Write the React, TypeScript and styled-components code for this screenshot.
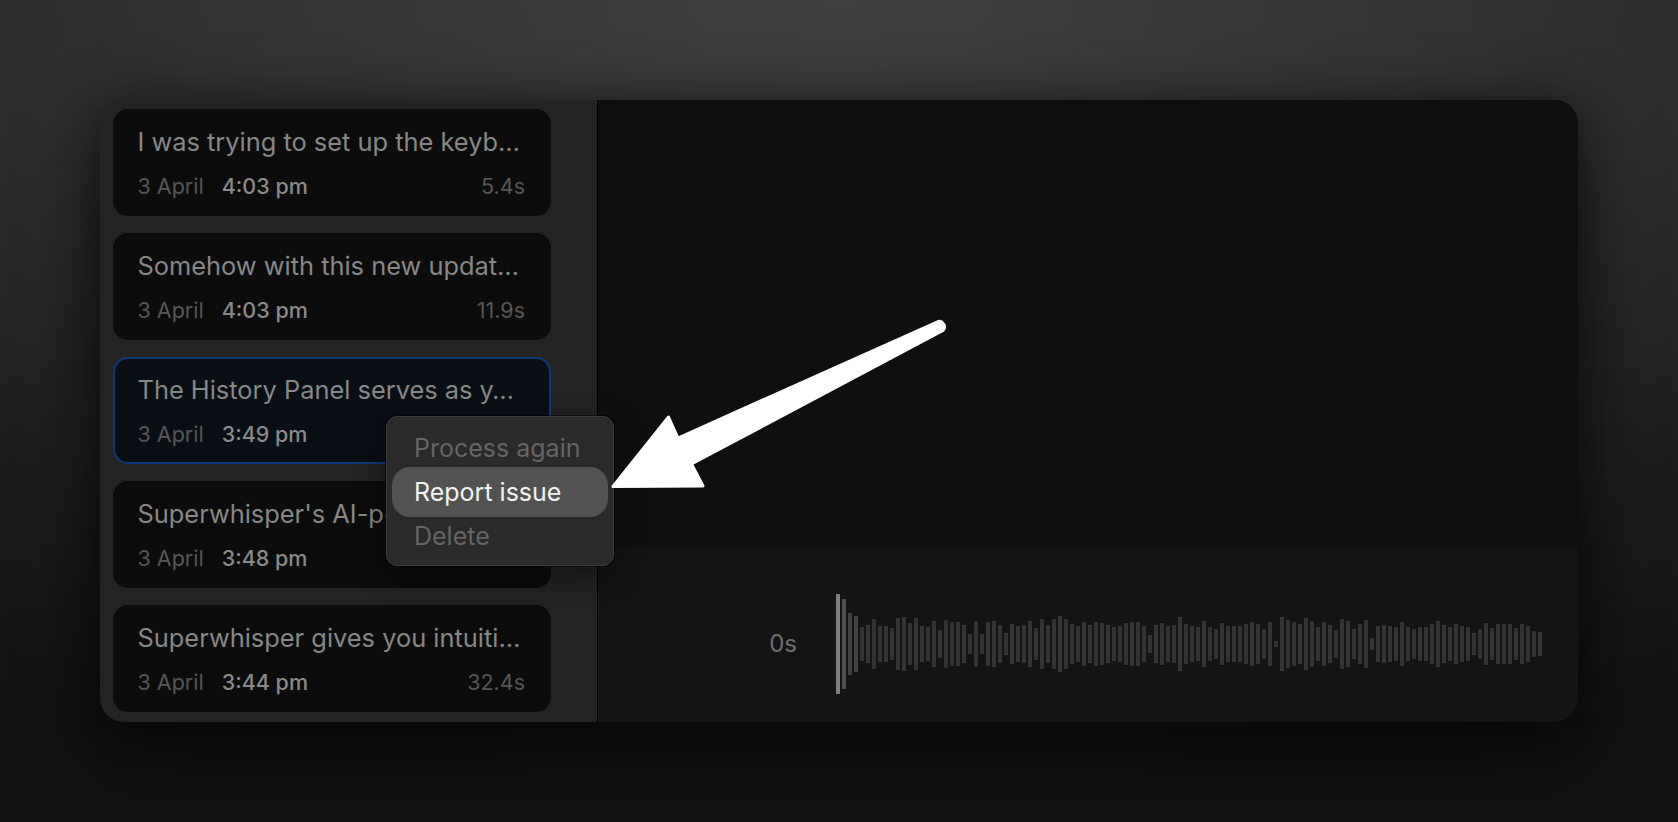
import React from "react";
import styled, { createGlobalStyle } from "styled-components";

const GlobalStyle = createGlobalStyle`
  html, body {
    margin: 0;
    padding: 0;
    height: 100%;
  }
  body {
    font-family: Inter, "Noto Sans", "Liberation Sans", sans-serif;
    background: #1a1a1a;
    -webkit-font-smoothing: antialiased;
  }
  #root {
    height: 100%;
  }
`;

const Page = styled.div`
  position: relative;
  width: 100%;
  height: 100vh;
  display: flex;
  align-items: center;
  justify-content: center;
  overflow: hidden;
  background: radial-gradient(
    120% 95% at 50% 0%,
    #414141 0%,
    #333333 30%,
    #262626 55%,
    #1a1a1a 78%,
    #121212 100%
  );
`;

const Window = styled.div`
  position: relative;
  width: 1478px;
  height: 622px;
  display: flex;
  border-radius: 24px;
  overflow: hidden;
  box-shadow: 0 30px 80px rgba(0, 0, 0, 0.55), 0 0 40px rgba(0, 0, 0, 0.35);
`;

const Sidebar = styled.div`
  width: 498px;
  flex: none;
  box-sizing: border-box;
  padding: 9px 46px 10px 13px;
  background: #232323;
  border-right: 1px solid #000;
  display: flex;
  flex-direction: column;
  gap: 17px;
`;

const Card = styled.div<{ $selected?: boolean }>`
  height: 107px;
  flex: none;
  box-sizing: border-box;
  border-radius: 15px;
  background: ${(p) => (p.$selected ? "#0a0e15" : "#0c0c0c")};
  border: 2px solid ${(p) => (p.$selected ? "#0b3a7c" : "transparent")};
  padding: 15px 24px 0 22.5px;
  display: flex;
  flex-direction: column;
`;

const Title = styled.div`
  font-size: 25.4px;
  line-height: 31px;
  color: #878787;
  white-space: nowrap;
  overflow: hidden;
`;

const Meta = styled.div`
  display: flex;
  align-items: baseline;
  margin-top: 16px;
  font-size: 21.5px;
  line-height: 26px;
`;

const DateText = styled.span`
  color: #575757;
`;

const TimeText = styled.span`
  color: #8a8a8a;
  font-weight: 500;
  margin-left: 18px;
`;

const Duration = styled.span`
  margin-left: auto;
  color: #575757;
`;

const Main = styled.div`
  flex: 1;
  display: flex;
  flex-direction: column;
  background: #0f0f0f;
`;

const Preview = styled.div`
  height: 447px;
  flex: none;
  background: #0f0f0f;
`;

const Player = styled.div`
  flex: 1;
  box-sizing: border-box;
  padding-top: 19px;
  background: #141414;
  display: flex;
  align-items: center;
`;

const TimeLabel = styled.div`
  width: 199px;
  flex: none;
  margin-right: 39px;
  text-align: right;
  font-size: 24px;
  line-height: 1;
  color: #6f6f6f;
`;

const Wave = styled.svg`
  display: block;
  flex: none;
`;

const Menu = styled.div`
  position: absolute;
  left: 286px;
  top: 316px;
  width: 228px;
  height: 150px;
  box-sizing: border-box;
  padding: 9px 5px 0;
  background: #2a2a2a;
  border: 1px solid #3b3b3b;
  border-radius: 11px;
  box-shadow: 0 0 0 1px rgba(0, 0, 0, 0.55), 0 10px 30px rgba(0, 0, 0, 0.45);
  display: flex;
  flex-direction: column;
`;

const MenuItem = styled.div<{ $active?: boolean }>`
  height: ${(p) => (p.$active ? "50px" : "44px")};
  margin: ${(p) => (p.$active ? "-3px 0" : "0")};
  flex: none;
  box-sizing: border-box;
  display: flex;
  align-items: center;
  padding-left: 22px;
  border-radius: 18px;
  font-size: 25px;
  color: ${(p) => (p.$active ? "#f2f2f2" : "#666666")};
  background: ${(p) => (p.$active ? "#525252" : "transparent")};
`;

const Overlay = styled.svg`
  position: absolute;
  left: 0;
  top: 0;
  pointer-events: none;
`;

const items = [
  { title: "I was trying to set up the keyb…", time: "4:03 pm", dur: "5.4s" },
  { title: "Somehow with this new updat…", time: "4:03 pm", dur: "11.9s" },
  { title: "The History Panel serves as y…", time: "3:49 pm", dur: "27.3s", selected: true },
  { title: "Superwhisper's AI-powered…", time: "3:48 pm", dur: "" },
  { title: "Superwhisper gives you intuiti…", time: "3:44 pm", dur: "32.4s" },
];

const bars = [
  100, 90, 62, 56, 34, 38, 50, 36, 36, 32, 52, 54, 42, 52, 36, 34, 46, 28, 48, 44,
  44, 38, 20, 46, 20, 44, 46, 38, 22, 40, 36, 38, 46, 32, 50, 38, 50, 56, 50, 40,
  36, 44, 38, 44, 42, 38, 34, 36, 42, 44, 44, 36, 18, 38, 42, 36, 38, 54, 40, 36,
  34, 46, 34, 30, 42, 36, 36, 36, 40, 44, 40, 30, 44, 6, 54, 48, 44, 40, 52, 46,
  34, 44, 38, 28, 50, 46, 30, 40, 48, 12, 36, 38, 36, 34, 44, 34, 30, 34, 34, 40,
  46, 38, 34, 40, 36, 34, 22, 30, 42, 32, 40, 40, 40, 32, 40, 36, 26, 24,
];

const barColor = (i: number) =>
  i === 0 ? "#7f7f7f" : i === 1 ? "#505050" : i < 4 ? "#424242" : "#333333";

export default function App() {
  return (
    <>
      <GlobalStyle />
      <Page>
        <Window>
          <Sidebar>
            {items.map((it, i) => (
              <Card key={i} $selected={it.selected}>
                <Title>{it.title}</Title>
                <Meta>
                  <DateText>3 April</DateText>
                  <TimeText>{it.time}</TimeText>
                  {it.dur && <Duration>{it.dur}</Duration>}
                </Meta>
              </Card>
            ))}
          </Sidebar>
          <Main>
            <Preview />
            <Player>
              <TimeLabel>0s</TimeLabel>
              <Wave width={bars.length * 6 - 2} height={100} viewBox={`0 0 ${bars.length * 6 - 2} 100`}>
                {bars.map((h, i) => (
                  <rect key={i} x={i * 6} y={50 - h / 2} width={4} height={h} fill={barColor(i)} />
                ))}
              </Wave>
            </Player>
          </Main>
          <Menu>
            <MenuItem>Process again</MenuItem>
            <MenuItem $active>Report issue</MenuItem>
            <MenuItem>Delete</MenuItem>
          </Menu>
        </Window>
        <Overlay width={1678} height={822} viewBox="0 0 1678 822">
          <path
            d="M937 322 L678 438 L668.5 417 L613 486.5 L703 486 L691.5 464 L943 330.5 A5.3 5.3 0 0 0 937 322 Z"
            fill="#ffffff"
            stroke="#ffffff"
            strokeWidth={3}
            strokeLinejoin="round"
          />
        </Overlay>
      </Page>
    </>
  );
}
